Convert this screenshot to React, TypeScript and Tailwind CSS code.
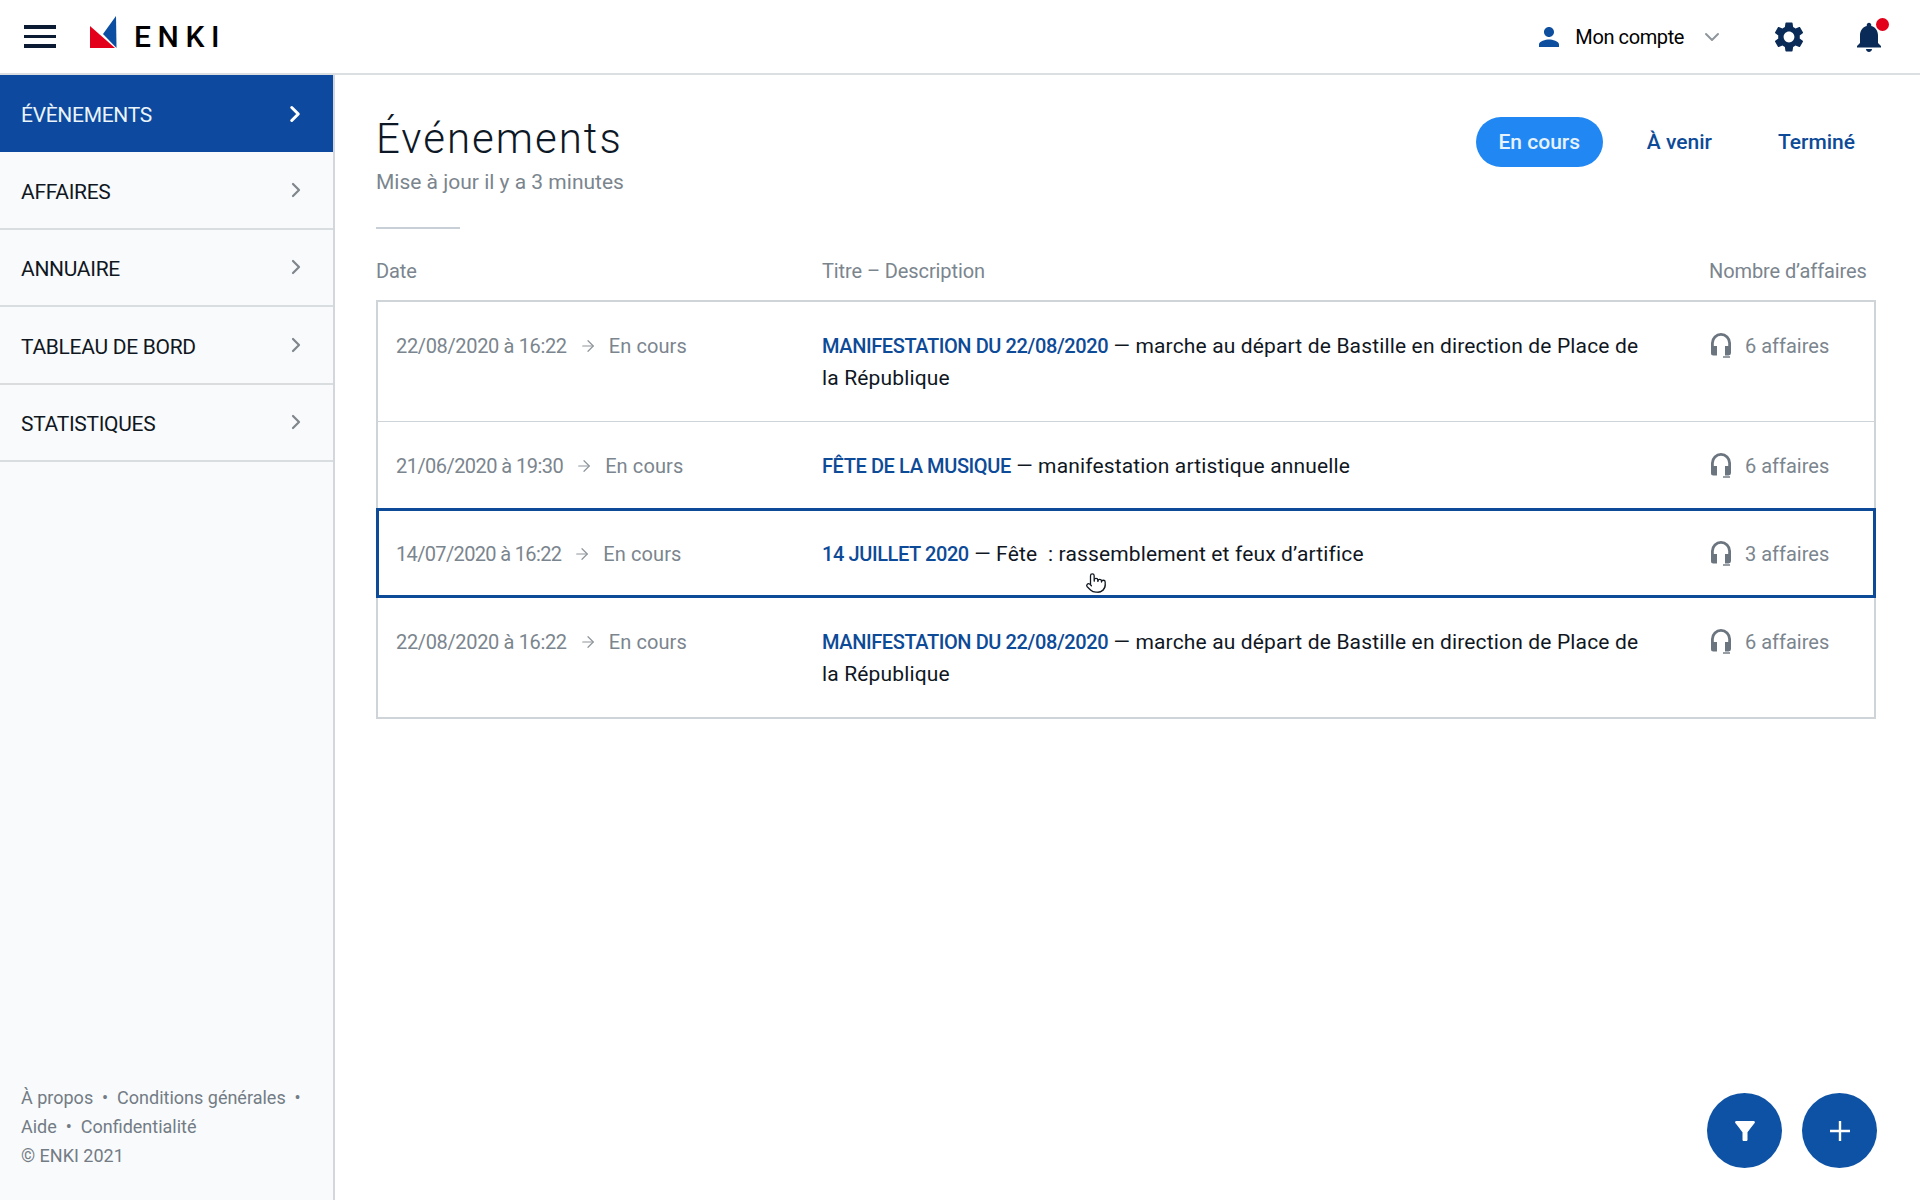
import { ChevronDown, ChevronRight, ArrowRight, Pointer } from 'lucide-react';

const navItems = ['ÉVÈNEMENTS', 'AFFAIRES', 'ANNUAIRE', 'TABLEAU DE BORD', 'STATISTIQUES'];

const rows = [
  {
    date: '22/08/2020 à 16:22',
    dateClass: 'tracking-[-0.35px]',
    title: 'MANIFESTATION DU 22/08/2020',
    text: 'marche au départ de Bastille en direction de Place de la République',
    count: '6 affaires',
  },
  {
    date: '21/06/2020 à 19:30',
    dateClass: 'tracking-[-0.55px]',
    title: 'FÊTE DE LA MUSIQUE',
    text: 'manifestation artistique annuelle',
    count: '6 affaires',
  },
  {
    date: '14/07/2020 à 16:22',
    dateClass: 'tracking-[-0.65px]',
    title: '14 JUILLET 2020',
    text: 'Fête\u00a0 : rassemblement et feux d’artifice',
    count: '3 affaires',
    active: true,
  },
  {
    date: '22/08/2020 à 16:22',
    dateClass: 'tracking-[-0.35px]',
    title: 'MANIFESTATION DU 22/08/2020',
    text: 'marche au départ de Bastille en direction de Place de la République',
    count: '6 affaires',
  },
];

function Logo() {
  return (
    <svg className="mb-[10px]" width="27" height="32" viewBox="0 0 27 32">
      <polygon points="13,18 26,0 26.5,32" fill="#0b4ea2" />
      <polygon points="0,10 25,32 0,32" fill="#e2001a" />
    </svg>
  );
}

function HeadphonesIcon() {
  return (
    <svg width="24" height="26" viewBox="0 0 24 26" fill="none">
      <path d="M3.4 15V11a8.6 8.6 0 0 1 17.2 0v4" stroke="#6b7580" strokeWidth="2.8" />
      <path d="M2 14h6v9.5H4.4A2.4 2.4 0 0 1 2 21z" fill="#6b7580" />
      <path d="M16 14h6v7a2.4 2.4 0 0 1-2.4 2.4H16z" fill="#6b7580" />
      <path d="M14 25h7" stroke="#6b7580" strokeWidth="1.4" />
    </svg>
  );
}

function Row({ row, last }: { row: (typeof rows)[number]; last: boolean }) {
  return (
    <div
      className={
        'relative grid grid-cols-[426px_887px_1fr] pl-[18px] pt-[28px] leading-[32px] text-[20px] ' +
        (row.active
          ? 'z-10 pb-[25px] mb-[2px] outline-[3px] outline outline-offset-[-1px] outline-[#0d4a97] '
          : 'pb-[27px] ') +
        (last ? '' : 'border-b border-[#cfd4d9]')
      }
    >
      <div className="flex items-center self-start text-[#7b858e]">
        <span className={row.dateClass}>{row.date}</span>
        <ArrowRight className="mx-[12px] text-[#8d959c]" size={18} strokeWidth={1.6} />
        <span className="tracking-[0.1px]">En cours</span>
      </div>
      <div className="pr-[62px] text-[21px] text-[#10171f] tracking-[0.15px]">
        <span className="text-[20px] font-medium text-[#0d4a97] tracking-[-0.4px]">{row.title}</span> — {row.text}
      </div>
      <div className="flex items-start gap-[12px] text-[#7b858e]">
        <span className="pt-[2px]">
          <HeadphonesIcon />
        </span>
        <span>{row.count}</span>
      </div>
    </div>
  );
}

export default function App() {
  return (
    <div className="flex flex-col h-[1200px] bg-white text-[#10171f] font-['Roboto',sans-serif] overflow-hidden">
      <header className="flex items-center h-[75px] shrink-0 border-b-2 border-[#dcdfe2] pl-[24px] pr-[33px]">
        <div className="flex flex-col gap-[6px] w-[32px]">
          <div className="h-[3.5px] bg-[#0a1b33]" />
          <div className="h-[3.5px] bg-[#0a1b33]" />
          <div className="h-[3.5px] bg-[#0a1b33]" />
        </div>
        <div className="ml-[34px] flex items-center">
          <Logo />
          <span className="ml-[17px] text-[30px] leading-none font-medium tracking-[6.6px] text-black">ENKI</span>
        </div>
        <div className="ml-auto flex items-center">
          <svg width="30" height="30" viewBox="0 0 24 24" fill="#0d4f9e">
            <path d="M12 12c2.21 0 4-1.79 4-4s-1.79-4-4-4-4 1.79-4 4 1.79 4 4 4zm0 2c-2.67 0-8 1.34-8 4v2h16v-2c0-2.66-5.33-4-8-4z" />
          </svg>
          <span className="ml-[11px] text-[20px] tracking-[-0.4px] text-black">Mon compte</span>
          <ChevronDown className="ml-[16px] text-[#8f969c]" size={24} strokeWidth={2} />
          <svg className="ml-[47px]" width="36" height="36" viewBox="0 0 24 24" fill="#0a2a57">
            <path d="M19.14 12.94c.04-.3.06-.61.06-.94 0-.32-.02-.64-.07-.94l2.03-1.58c.18-.14.23-.41.12-.61l-1.92-3.32c-.12-.22-.37-.29-.59-.22l-2.39.96c-.5-.38-1.03-.7-1.62-.94l-.36-2.54c-.04-.24-.24-.41-.48-.41h-3.84c-.24 0-.43.17-.47.41l-.36 2.54c-.59.24-1.13.57-1.62.94l-2.39-.96c-.22-.08-.47 0-.59.22L2.74 8.87c-.12.21-.08.47.12.61l2.03 1.58c-.05.3-.09.63-.09.94s.02.64.07.94l-2.03 1.58c-.18.14-.23.41-.12.61l1.92 3.32c.12.22.37.29.59.22l2.39-.96c.5.38 1.03.7 1.62.94l.36 2.54c.05.24.24.41.48.41h3.84c.24 0 .44-.17.47-.41l.36-2.54c.59-.24 1.13-.56 1.62-.94l2.39.96c.22.08.47 0 .59-.22l1.92-3.32c.12-.22.07-.47-.12-.61l-2.01-1.58zM12 15.6c-1.98 0-3.6-1.62-3.6-3.6s1.62-3.6 3.6-3.6 3.6 1.62 3.6 3.6-1.62 3.6-3.6 3.6z" />
          </svg>
          <div className="relative ml-[44px]">
            <svg width="36" height="36" viewBox="0 0 24 24" fill="#0a2a57">
              <path d="M12 22c1.1 0 2-.9 2-2h-4c0 1.1.89 2 2 2zm6-6v-5c0-3.07-1.64-5.64-4.5-6.32V4c0-.83-.67-1.5-1.5-1.5s-1.5.67-1.5 1.5v.68C7.63 5.36 6 7.92 6 11v5l-2 2v1h16v-1l-2-2z" />
            </svg>
            <div className="absolute right-[-2px] top-[-1px] w-[13px] h-[13px] rounded-full bg-[#e2001a]" />
          </div>
        </div>
      </header>

      <div className="flex flex-1 min-h-0">
        <aside className="flex flex-col justify-between w-[335px] shrink-0 bg-[#f8fafc] border-r-2 border-[#d3d7db]">
          <nav className="flex flex-col">
            {navItems.map((item, i) => (
              <div
                key={item}
                className={
                  'flex items-center justify-between h-[77.4px] pl-[21px] pr-[25px] text-[21px] tracking-[-0.3px] ' +
                  (i === 0
                    ? 'bg-[#0d4a9f] text-[#eaf4fb]'
                    : 'border-b-2 border-[#d9dde0] text-[#10171f]')
                }
              >
                <span className="pt-[5px]">{item}</span>
                <ChevronRight
                  className={i === 0 ? 'text-white' : 'text-[#7f868c]'}
                  size={i === 0 ? 26 : 24}
                  strokeWidth={i === 0 ? 2.8 : 2.2}
                />
              </div>
            ))}
          </nav>
          <footer className="px-[21px] pb-[30px] text-[18px] leading-[29px] text-[#737c85]">
            <div>À propos &nbsp;•&nbsp; Conditions générales &nbsp;•</div>
            <div>Aide &nbsp;•&nbsp; Confidentialité</div>
            <div>© ENKI 2021</div>
          </footer>
        </aside>

        <main className="relative flex-1 pl-[41px] pr-[44px]">
          <div className="flex items-start justify-between pt-[41px]">
            <div>
              <h1 className="text-[42px] leading-[46px] tracking-[2px] font-light text-[#0d1826]">Événements</h1>
              <p className="mt-[6px] text-[21px] leading-[28px] text-[#7b858e]">Mise à jour il y a 3 minutes</p>
              <div className="mt-[31px] w-[84px] h-[2px] bg-[#c9cfd6]" />
            </div>
            <div className="flex items-center mt-[1px] text-[21px] font-medium text-[#0d4a97]">
              <span className="flex items-center justify-center w-[127px] h-[50px] pt-[2px] rounded-full bg-[#2188f3] text-[#e6f2fd]">
                En cours
              </span>
              <span className="ml-[44px] pt-[2px]">À venir</span>
              <span className="ml-[66px] mr-[21px] pt-[2px]">Terminé</span>
            </div>
          </div>

          <div className="grid grid-cols-[446px_887px_1fr] mt-[27px] h-[44px] text-[20px] text-[#7b858e] tracking-[-0.1px]">
            <span>Date</span>
            <span>Titre – Description</span>
            <span className="whitespace-nowrap">Nombre d’affaires</span>
          </div>

          <div className="border-2 border-[#cfd4d9]">
            {rows.map((row, i) => (
              <Row key={i} row={row} last={i === rows.length - 1} />
            ))}
          </div>

          <Pointer
            className="absolute left-[750px] top-[497px] z-20 text-[#10171f] fill-white"
            size={22}
            strokeWidth={1.4}
          />

          <div className="absolute right-[43px] bottom-[32px] flex gap-[20px]">
            <button className="flex items-center justify-center w-[75px] h-[75px] rounded-full bg-[#0d52a5]">
              <svg width="30" height="30" viewBox="0 0 24 24" fill="#fff">
                <path d="M4.25 5.61C6.27 8.2 10 13 10 13v6c0 .55.45 1 1 1h2c.55 0 1-.45 1-1v-6s3.72-4.8 5.74-7.39c.51-.66.04-1.61-.79-1.61H5.04c-.83 0-1.3.95-.79 1.61z" />
              </svg>
            </button>
            <button className="flex items-center justify-center w-[75px] h-[75px] rounded-full bg-[#0d52a5]">
              <svg width="20" height="20" viewBox="0 0 20 20" stroke="#fff" strokeWidth="2.4">
                <path d="M10 0v20M0 10h20" />
              </svg>
            </button>
          </div>
        </main>
      </div>
    </div>
  );
}
